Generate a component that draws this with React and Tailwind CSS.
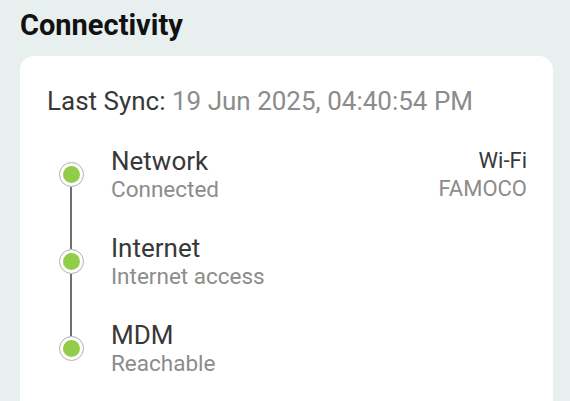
export default function App() {
  const rows = [
    { title: "Network", sub: "Connected", rt: "Wi-Fi", rs: "FAMOCO" },
    { title: "Internet", sub: "Internet access" },
    { title: "MDM", sub: "Reachable" },
  ];
  return (
    <div className="w-[570px] h-[401px] overflow-hidden bg-[#e8efef] px-5 pt-[6px]" style={{ fontFamily: "Roboto, 'Liberation Sans', sans-serif" }}>
      <h1 className="text-[29px] leading-[38px] font-bold text-[#111]">Connectivity</h1>
      <div className="mt-[12px] w-[533px] bg-white rounded-[14px] pl-[27px] pr-[26px] pt-[30px] pb-10">
        <div className="text-[26px] leading-[30px] text-[#383838]">
          Last Sync: <span className="text-[#8c8c8c]">19 Jun 2025, 04:40:54 PM</span>
        </div>
        <div className="mt-[31px] flex flex-col">
          {rows.map((r, i) => (
            <div key={i} className="flex h-[87px]">
              <div className="w-[48px] flex flex-col items-center">
                <div className={`w-[1.5px] h-[15px] ${i === 0 ? "bg-transparent" : "bg-[#707070]"}`} />
                <div className="w-[25px] h-[25px] shrink-0 rounded-full border border-[#b0b0b0] flex items-center justify-center bg-white">
                  <div className="w-[17px] h-[17px] rounded-full bg-[#92cd4a]" />
                </div>
                <div className={`w-[1.5px] flex-1 ${i === rows.length - 1 ? "bg-transparent" : "bg-[#707070]"}`} />
              </div>
              <div className="ml-[16px] flex-1 flex justify-between">
                <div>
                  <div className="text-[26px] leading-[28px] text-[#383838]">{r.title}</div>
                  <div className="text-[22.5px] leading-[28px] text-[#8c8c8c]">{r.sub}</div>
                </div>
                {r.rt && (
                  <div className="text-right">
                    <div className="text-[22px] leading-[28px] text-[#383838]">{r.rt}</div>
                    <div className="text-[22px] leading-[28px] text-[#8c8c8c]">{r.rs}</div>
                  </div>
                )}
              </div>
            </div>
          ))}
        </div>
      </div>
    </div>
  );
}
